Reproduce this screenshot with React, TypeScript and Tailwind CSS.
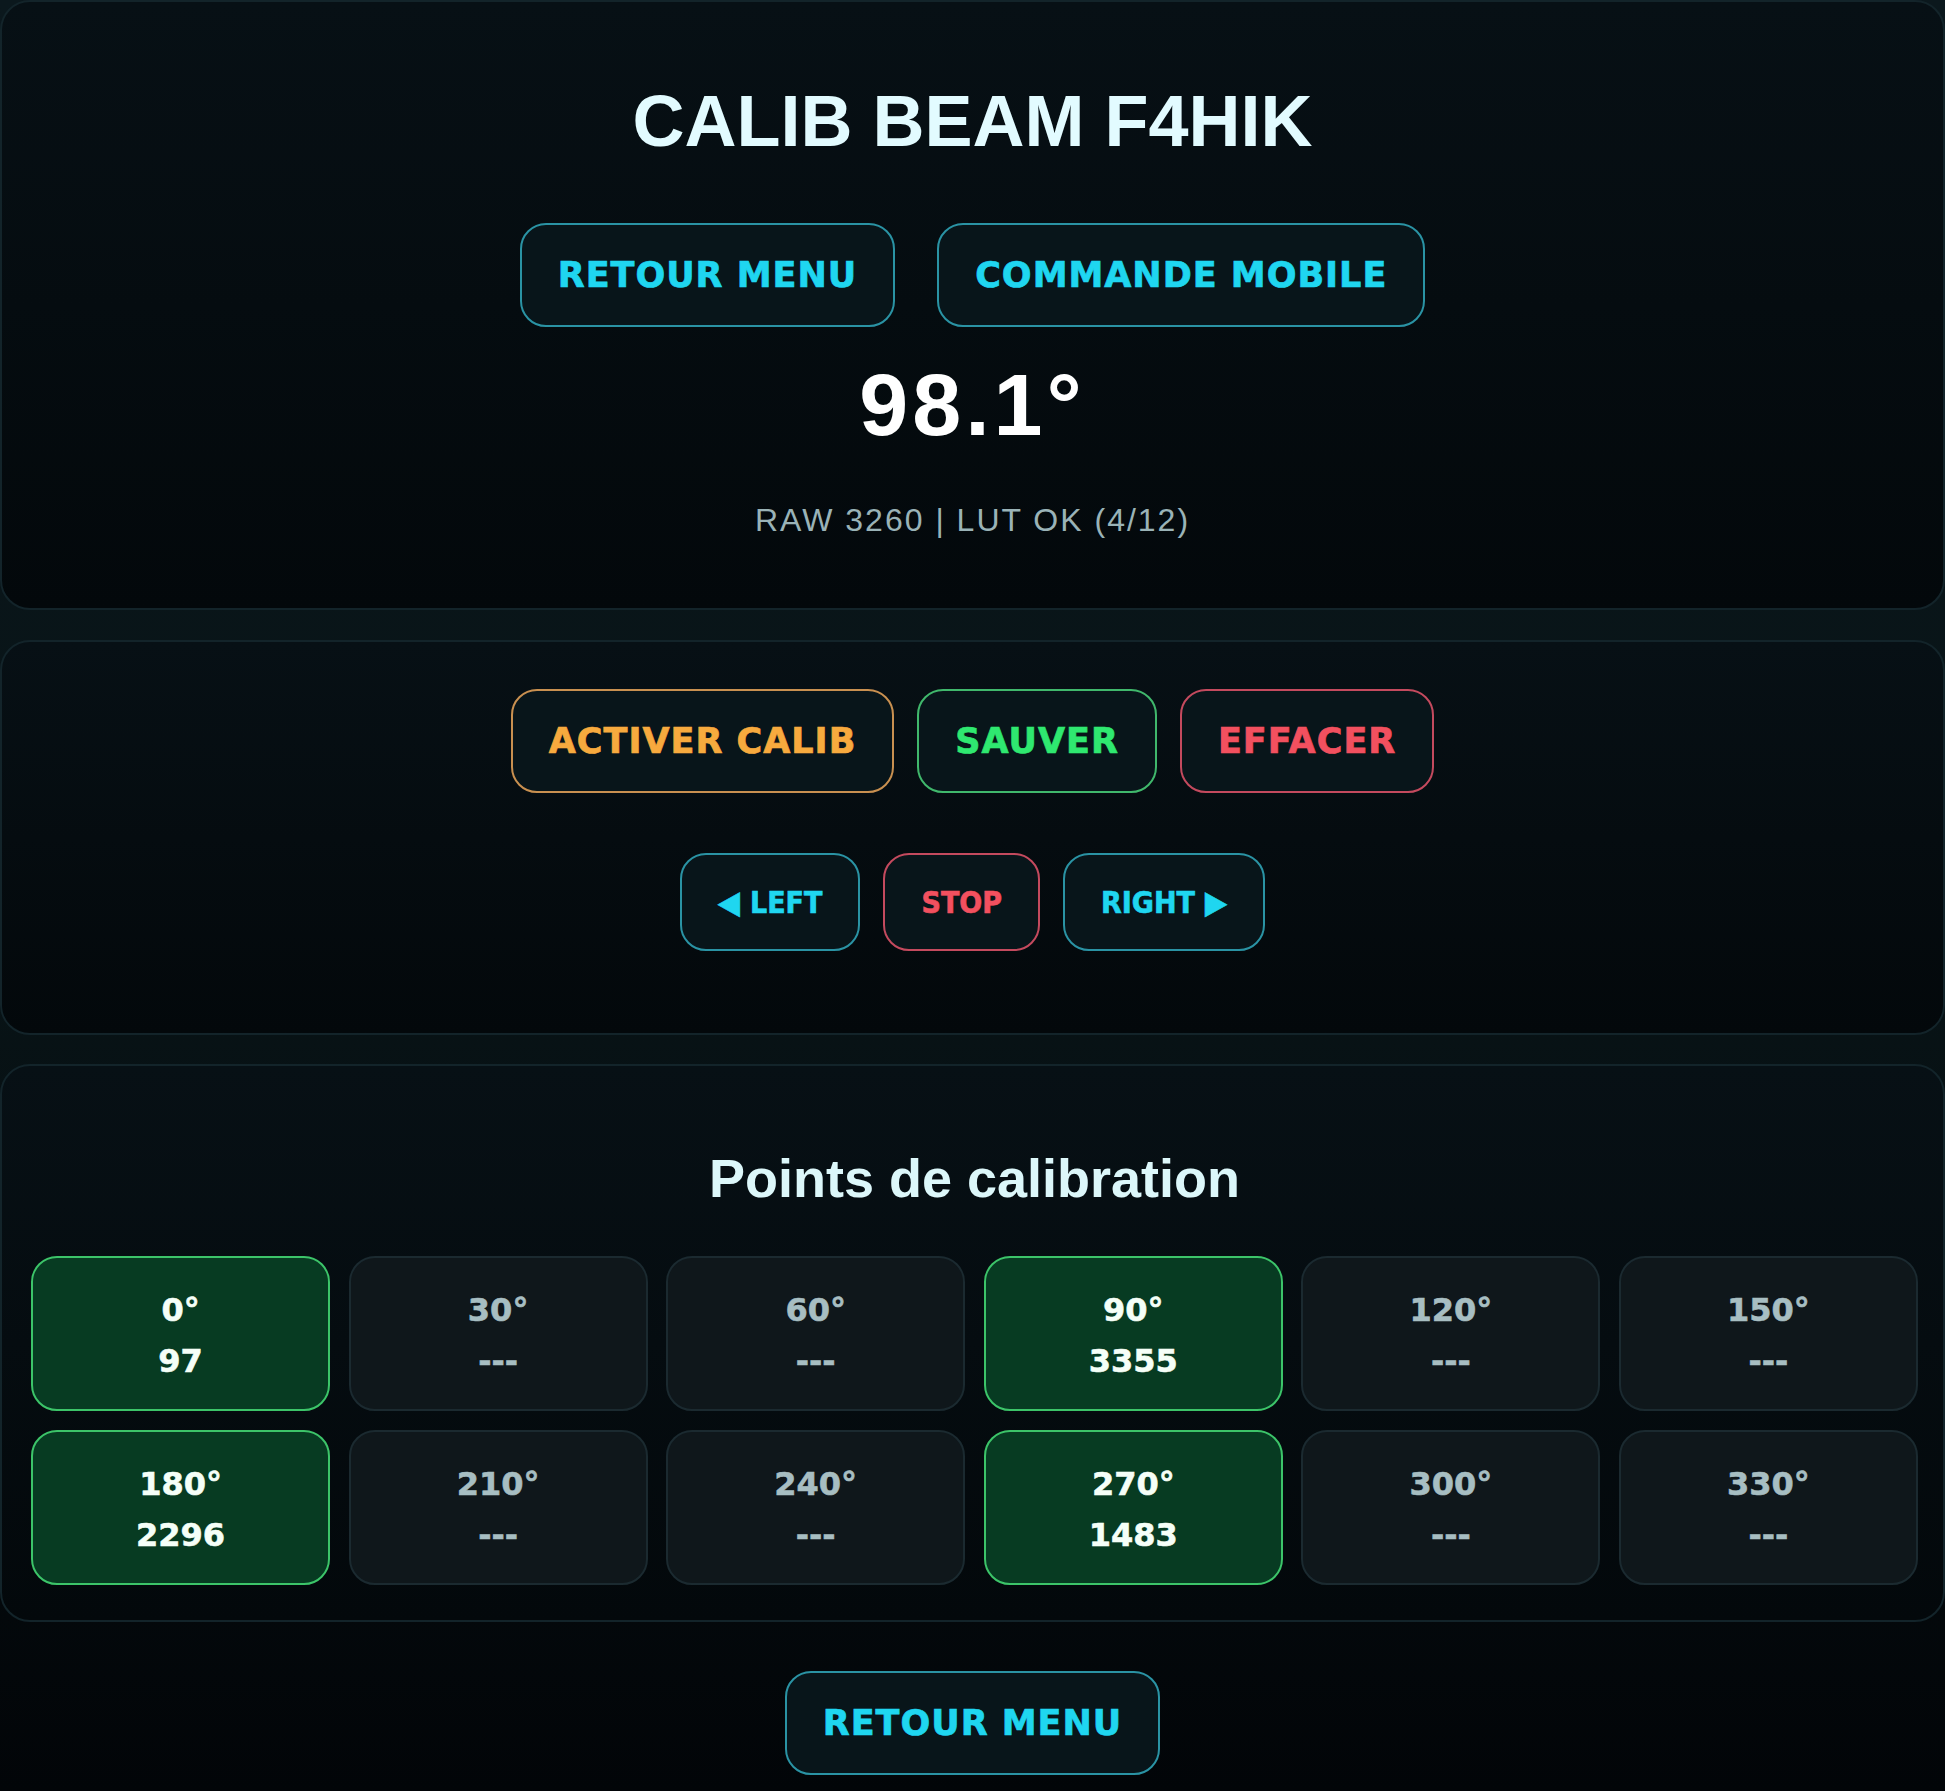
import React from "react";

type Tone = "cyan" | "orange" | "green" | "red";

const toneClasses: Record<Tone, string> = {
  cyan: "border-[#2a93a4] text-[#1fd6f0]",
  orange: "border-[#c99050] text-[#f7aa3e]",
  green: "border-[#40b86c] text-[#2fe870]",
  red: "border-[#c44a5e] text-[#f2505f]",
};

function BigButton({ label, tone }: { label: string; tone: Tone }) {
  return (
    <button
      className={`flex h-[104px] items-center justify-center rounded-[26px] border-2 bg-[#08151a] px-[36px] font-['DejaVu_Sans',Verdana,sans-serif] text-[35px] font-bold tracking-[1px] [-webkit-text-stroke:0.7px_currentColor] ${toneClasses[tone]}`}
    >
      {label}
    </button>
  );
}

function MoveButton({ children, tone }: { children: React.ReactNode; tone: Tone }) {
  return (
    <button
      className={`flex h-[98px] items-center justify-center gap-[10px] rounded-[26px] border-2 bg-[#08151a] px-[36px] font-['DejaVu_Sans_Condensed','DejaVu_Sans',sans-serif] text-[30px] font-bold font-stretch-condensed [-webkit-text-stroke:0.6px_currentColor] ${toneClasses[tone]}`}
    >
      {children}
    </button>
  );
}

const points = [
  { deg: 0, raw: "97" },
  { deg: 30 },
  { deg: 60 },
  { deg: 90, raw: "3355" },
  { deg: 120 },
  { deg: 150 },
  { deg: 180, raw: "2296" },
  { deg: 210 },
  { deg: 240 },
  { deg: 270, raw: "1483" },
  { deg: 300 },
  { deg: 330 },
];

function PointCell({ deg, raw }: { deg: number; raw?: string }) {
  const set = raw !== undefined;
  return (
    <div
      className={`flex h-[155px] flex-col items-center justify-center rounded-[26px] border-2 pt-[5px] font-['DejaVu_Sans',Verdana,sans-serif] text-[32px] font-bold [-webkit-text-stroke:0.6px_currentColor] ${
        set
          ? "border-[#3cc469] bg-[#073b22] text-[#f5fff8]"
          : "border-[#1b2a30] bg-[#0f171b] text-[#a7bec2]"
      }`}
    >
      <div className="leading-[51px]">{deg}°</div>
      <div className="leading-[51px]">{set ? raw : "---"}</div>
    </div>
  );
}

export default function App() {
  const card =
    "rounded-[30px] border-2 border-[#13242a] bg-[linear-gradient(180deg,#071015_0%,#03080b_100%)]";

  return (
    <div className="min-h-[1791px] w-full bg-[linear-gradient(180deg,#0b181d_0%,#081316_55%,#020508_100%)] font-['Liberation_Sans',Arial,sans-serif]">
      {/* statut */}
      <section className={`${card} flex flex-col items-center pt-[79px] pb-[68px]`}>
        <h1 className="text-[72px] font-bold leading-[80px] text-[#e2fbff]">CALIB BEAM F4HIK</h1>
        <div className="mt-[62px] flex gap-[42px]">
          <BigButton label="RETOUR MENU" tone="cyan" />
          <BigButton label="COMMANDE MOBILE" tone="cyan" />
        </div>
        <div className="mt-[30px] text-[88px] font-bold leading-[96px] tracking-[4px] text-white">98.1°</div>
        <div className="mt-[47px] text-[32px] leading-[40px] tracking-[2px] text-[#9ab3b7]">
          RAW 3260 | LUT OK (4/12)
        </div>
      </section>

      {/* commandes */}
      <section className={`${card} mt-[30px] flex flex-col items-center pt-[47px] pb-[82px]`}>
        <div className="flex gap-[23px]">
          <BigButton label="ACTIVER CALIB" tone="orange" />
          <BigButton label="SAUVER" tone="green" />
          <BigButton label="EFFACER" tone="red" />
        </div>
        <div className="mt-[60px] flex gap-[23px]">
          <MoveButton tone="cyan">
            <span className="text-[32px]">◀</span>
            <span>LEFT</span>
          </MoveButton>
          <MoveButton tone="red">STOP</MoveButton>
          <MoveButton tone="cyan">
            <span>RIGHT</span>
            <span className="text-[32px]">▶</span>
          </MoveButton>
        </div>
      </section>

      {/* points */}
      <section className={`${card} mt-[29px] pt-[81px] pb-[35px] pl-[29px] pr-[25px]`}>
        <h2 className="text-center text-[54px] font-bold leading-[62px] text-[#dcf7fa]">
          Points de calibration
        </h2>
        <div className="mt-[47px] grid grid-cols-6 gap-x-[18.5px] gap-y-[19px]">
          {points.map((p) => (
            <PointCell key={p.deg} deg={p.deg} raw={p.raw} />
          ))}
        </div>
      </section>

      <div className="mt-[49px] flex justify-center pb-[15px]">
        <BigButton label="RETOUR MENU" tone="cyan" />
      </div>
    </div>
  );
}
